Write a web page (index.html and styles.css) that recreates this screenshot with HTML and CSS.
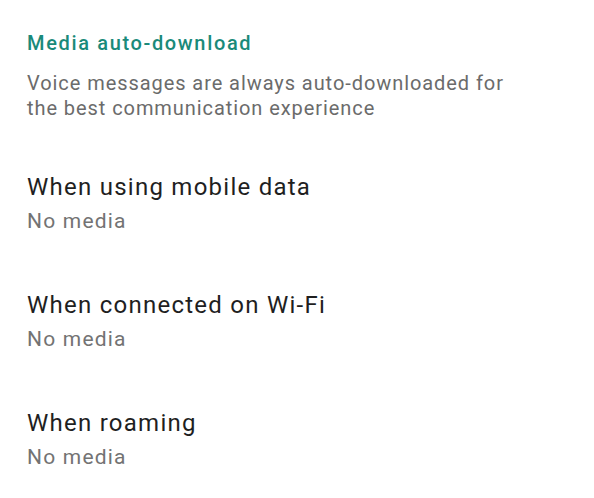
FILE: index.html
```html
<!DOCTYPE html>
<html>
<head>
<meta charset="utf-8">
<link rel="stylesheet" href="styles.css">
</head>
<body>
<div class="screen">
  <section class="group">
    <h2 class="group-title">Media auto-download</h2>
    <p class="group-desc">Voice messages are always auto-downloaded for<br>the best communication experience</p>
  </section>
  <ul class="list">
    <li class="item">
      <div class="item-title">When using mobile data</div>
      <div class="item-sub">No media</div>
    </li>
    <li class="item">
      <div class="item-title">When connected on Wi-Fi</div>
      <div class="item-sub">No media</div>
    </li>
    <li class="item">
      <div class="item-title">When roaming</div>
      <div class="item-sub">No media</div>
    </li>
  </ul>
</div>
</body>
</html>
```
FILE: styles.css
```css
html, body {
  margin: 0;
  padding: 0;
  background: #ffffff;
}
body {
  font-family: Roboto, "Noto Sans", sans-serif;
  width: 594px;
  height: 498px;
  overflow: hidden;
}
.screen {
  padding: 30px 0 0 27px;
}
.group-title {
  margin: 0;
  font-size: 20px;
  font-weight: 500;
  letter-spacing: 1.65px;
  color: #1a8a7a;
  line-height: 26px;
}
.group-desc {
  margin: 15px 0 0 0;
  font-size: 20px;
  letter-spacing: 0.93px;
  line-height: 25px;
  color: #6b6b6b;
}
.list {
  list-style: none;
  margin: 51px 0 0 0;
  padding: 0;
  display: flex;
  flex-direction: column;
  gap: 54px;
}
.item {
  display: flex;
  flex-direction: column;
  gap: 4px;
}
.item-title {
  font-size: 24px;
  letter-spacing: 1.25px;
  line-height: 30px;
  color: #1f1f1f;
}
.item-sub {
  font-size: 21px;
  letter-spacing: 1.2px;
  line-height: 30px;
  color: #737373;
}
```
